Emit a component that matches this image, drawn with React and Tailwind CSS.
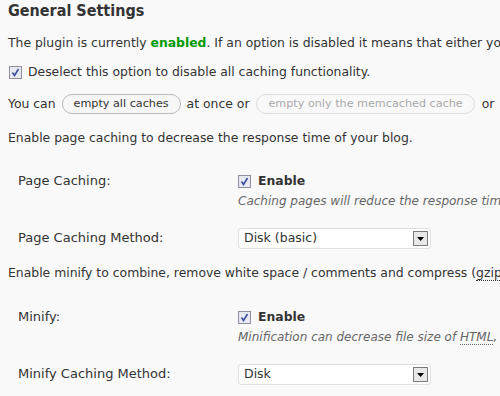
import React from "react";

function Check() {
  return (
    <span className="inline-flex w-[13px] h-[13px] shrink-0 items-center justify-center border border-[#8f8f9d] bg-[#e9e9f1]">
      <svg width="9" height="9" viewBox="0 0 9 9">
        <path d="M1.5 4.5 L3.5 7.5 L7.5 1" fill="none" stroke="#3b4fa0" strokeWidth="1.6" />
      </svg>
    </span>
  );
}

function Select({ value }) {
  return (
    <div className="flex h-[21px] w-[193px] items-center justify-between rounded-[3px] border border-[#dfdfdf] bg-white pl-[5px] pr-[2px] text-[12.5px]">
      <span>{value}</span>
      <span className="flex h-[15px] w-[15px] items-center justify-center border border-[#7a7a7a] bg-[#e8e8e8]">
        <svg width="7" height="4" viewBox="0 0 7 4"><path d="M0 0 H7 L3.5 4 Z" fill="#000" /></svg>
      </span>
    </div>
  );
}

export default function App() {
  return (
    <div
      className="h-[396px] w-[500px] overflow-hidden bg-[#f9f9f9] text-[12.4px] text-[#333] whitespace-nowrap"
      style={{ fontFamily: "Verdana, 'DejaVu Sans', sans-serif" }}
    >
      <div className="pl-[8px]">
        <h2
          className="text-[16px] font-bold leading-[22px] text-[#333]"
          style={{ fontFamily: "'DejaVu Sans Condensed', 'DejaVu Sans', sans-serif" }}
        >
          General Settings
        </h2>
        <p className="mt-[11px] leading-[20px]">
          The plugin is currently <span className="font-bold text-[#090]">enabled</span>. If an option is disabled it means that either your current installation
        </p>
        <div className="mt-[9px] flex items-center gap-[6px] pl-[1px] leading-[20px]">
          <Check />
          <span>Deselect this option to disable all caching functionality.</span>
        </div>
        <div className="mt-[12px] flex items-center leading-[20px]">
          <span>You can</span>
          <span className="mx-[6px] flex h-[20px] items-center rounded-full border border-[#bbb] bg-[#f7f7f7] px-[11px] text-[11.2px]">empty all caches</span>
          <span>at once or</span>
          <span className="mx-[7px] flex h-[20px] items-center rounded-full border border-[#ddd] bg-[#f9f9f9] px-[11px] text-[11.2px] text-[#aaa]">empty only the memcached cache</span>
          <span>or</span>
          <span className="ml-[6px] flex h-[20px] items-center rounded-full border border-[#ddd] px-[11px] text-[11.2px] text-[#aaa]">empty</span>
        </div>
        <p className="mt-[14px] leading-[20px]">Enable page caching to decrease the response time of your blog.</p>
      </div>

      <div className="mt-[23px] grid grid-cols-[220px_1fr] pl-[18px]">
        <div className="text-[13px] leading-[20px]">Page Caching:</div>
        <div>
          <div className="flex items-center gap-[7px] leading-[20px]">
            <Check />
            <span className="font-bold">Enable</span>
          </div>
          <div className="italic text-[12px] leading-[20px] text-[#666]">Caching pages will reduce the response time of your site and increase</div>
        </div>
        <div className="mt-[17px] text-[13px] leading-[20px]">Page Caching Method:</div>
        <div className="mt-[17px]"><Select value="Disk (basic)" /></div>
      </div>

      <p className="mt-[14px] pl-[8px] leading-[20px]">
        Enable minify to combine, remove white space / comments and compress (<span className="border-b border-dotted border-[#333]">gzip</span>) JavaScript
      </p>

      <div className="mt-[24px] grid grid-cols-[220px_1fr] pl-[18px]">
        <div className="text-[13px] leading-[20px]">Minify:</div>
        <div>
          <div className="flex items-center gap-[7px] leading-[20px]">
            <Check />
            <span className="font-bold">Enable</span>
          </div>
          <div className="italic text-[12px] leading-[20px] text-[#666]">
            Minification can decrease file size of <span className="border-b border-dotted border-[#666]">HTML</span>, <span className="border-b border-dotted border-[#666]">CSS</span>, JavaScript
          </div>
        </div>
        <div className="mt-[17px] text-[13px] leading-[20px]">Minify Caching Method:</div>
        <div className="mt-[17px]"><Select value="Disk" /></div>
      </div>
    </div>
  );
}
